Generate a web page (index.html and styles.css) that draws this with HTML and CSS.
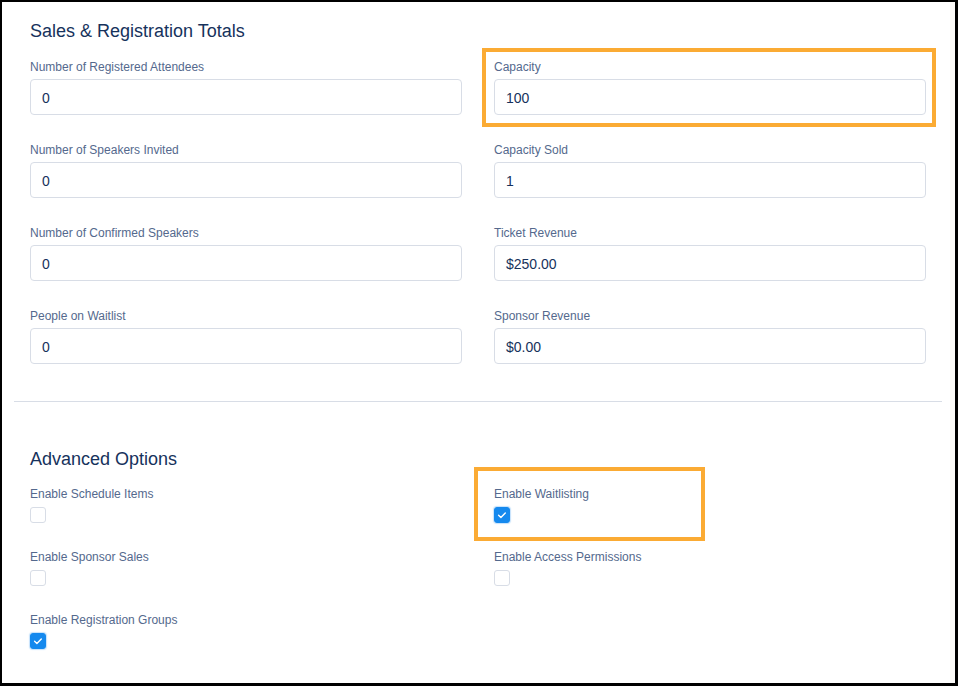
FILE: index.html
```html
<!DOCTYPE html>
<html>
<head>
<meta charset="utf-8">
<link rel="stylesheet" href="styles.css">
</head>
<body>
<div class="frame">
  <section class="section totals">
    <h2 class="heading">Sales &amp; Registration Totals</h2>
    <div class="grid fields">
      <div class="field"><div class="label">Number of Registered Attendees</div><div class="input">0</div></div>
      <div class="field"><span class="highlight hl-capacity"></span><div class="label">Capacity</div><div class="input">100</div></div>
      <div class="field"><div class="label">Number of Speakers Invited</div><div class="input">0</div></div>
      <div class="field"><div class="label">Capacity Sold</div><div class="input">1</div></div>
      <div class="field"><div class="label">Number of Confirmed Speakers</div><div class="input">0</div></div>
      <div class="field"><div class="label">Ticket Revenue</div><div class="input">$250.00</div></div>
      <div class="field"><div class="label">People on Waitlist</div><div class="input">0</div></div>
      <div class="field"><div class="label">Sponsor Revenue</div><div class="input">$0.00</div></div>
    </div>
  </section>
  <hr class="divider">
  <section class="section advanced">
    <h2 class="heading heading-adv">Advanced Options</h2>
    <div class="grid checks">
      <div class="field"><div class="label">Enable Schedule Items</div><span class="checkbox"></span></div>
      <div class="field"><span class="highlight hl-wait"></span><div class="label">Enable Waitlisting</div><span class="checkbox checked"><svg viewBox="0 0 16 16" width="16" height="16"><path d="M4.6 8.3 L6.9 10.4 L11.3 5.9" fill="none" stroke="#fff" stroke-width="1.4" stroke-linecap="round" stroke-linejoin="round"/></svg></span></div>
      <div class="field"><div class="label">Enable Sponsor Sales</div><span class="checkbox"></span></div>
      <div class="field"><div class="label">Enable Access Permissions</div><span class="checkbox"></span></div>
      <div class="field"><div class="label">Enable Registration Groups</div><span class="checkbox checked"><svg viewBox="0 0 16 16" width="16" height="16"><path d="M4.6 8.3 L6.9 10.4 L11.3 5.9" fill="none" stroke="#fff" stroke-width="1.4" stroke-linecap="round" stroke-linejoin="round"/></svg></span></div>
    </div>
  </section>
</div>
</body>
</html>
```
FILE: styles.css
```css
* { box-sizing: border-box; }
html, body { margin: 0; padding: 0; background: #fff; }
body { font-family: "Liberation Sans", Arial, sans-serif; }

.frame {
  width: 958px;
  height: 686px;
  border-style: solid;
  border-color: #000;
  border-width: 2px 3px 3px 2px;
  background: #fff;
  box-shadow: inset -5px 0 0 #fcfbf9;
  padding: 0 13px 0 12px;
  overflow: hidden;
}

.section { padding: 0 16px; }
.totals { padding-top: 17px; padding-bottom: 37px; }
.advanced { padding-top: 45px; }

.heading {
  margin: 0 0 16px;
  font-size: 18px;
  line-height: 24px;
  font-weight: normal;
  color: #16325c;
}
.heading-adv { margin-bottom: 15px; }

.divider {
  margin: 0;
  border: 0;
  height: 1px;
  background: #d8dde6;
}

.grid {
  display: grid;
  grid-template-columns: 432px 432px;
  column-gap: 32px;
}
.fields { row-gap: 27px; }
.checks { row-gap: 26px; }

.field { position: relative; display: flex; flex-direction: column; align-items: flex-start; }

.label {
  font-size: 12px;
  line-height: 16px;
  color: #54698d;
}
.fields .label { margin-bottom: 4px; }
.checks .label { margin-bottom: 5px; }

.input {
  width: 100%;
  height: 36px;
  border: 1px solid #d8dde6;
  border-radius: 4px;
  padding: 1px 12px 0 11px;
  font-size: 14px;
  line-height: 34px;
  color: #16325c;
  background: #fff;
}

.checkbox {
  display: block;
  width: 16px;
  height: 16px;
  border: 1px solid #d8dde6;
  border-radius: 3px;
  background: #fff;
}
.checkbox.checked {
  background: #1589ee;
  border-color: #1589ee;
  box-shadow: 0 0 1px 1px rgba(21, 137, 238, 0.25);
  position: relative;
}
.checkbox svg { position: absolute; left: -1px; top: -1px; }

.highlight {
  position: absolute;
  border: 4px solid #fbab34;
  pointer-events: none;
}
.hl-capacity { left: -12px; right: -10px; top: -11px; bottom: -12px; }
.hl-wait { left: -20px; top: -19px; width: 231px; bottom: -18px; }
```
